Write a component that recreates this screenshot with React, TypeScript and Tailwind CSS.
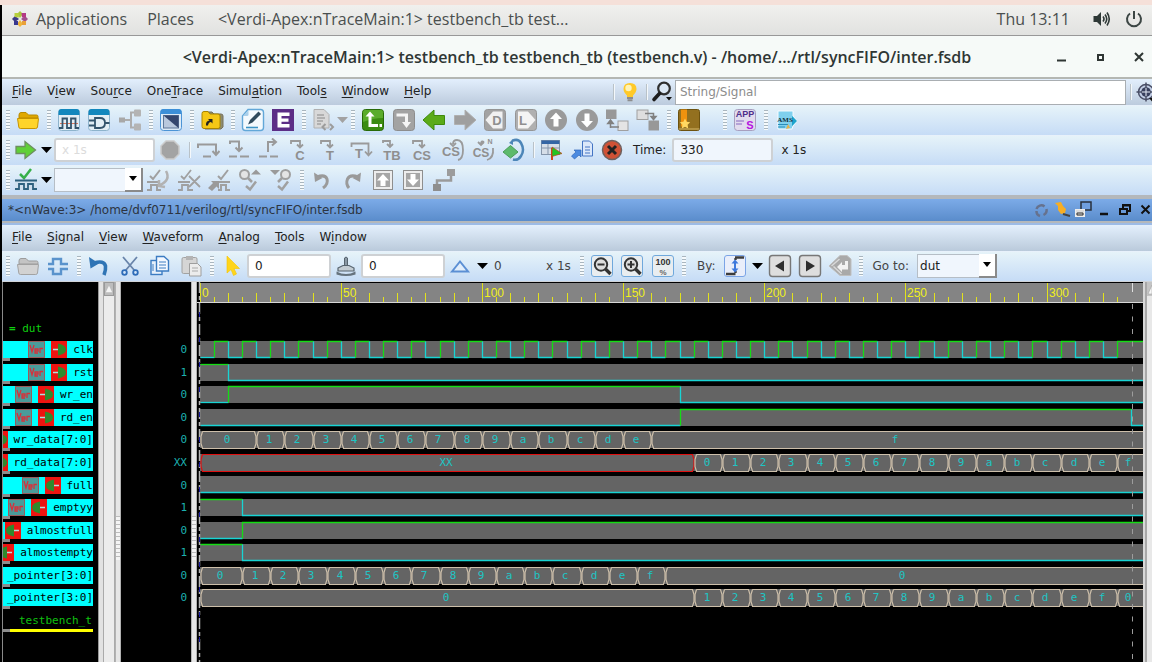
import type { ReactNode } from "react";

const GREY = "#9a9a9a";

const letterIcon = (label: string, size = 12, y = 21, x = 12) => (
  <text x={x} y={y} textAnchor="middle" fontSize={size} fontWeight="bold" fill="#8f8f8f" fontFamily="Liberation Sans, sans-serif">
    {label}
  </text>
);

const tile = (fill: string, stroke: string) => <rect x="1.5" y="1.5" width="21" height="21" rx="3" fill={fill} stroke={stroke} />;

const zoomGlass = (
  <>
    <rect x="1.5" y="1.5" width="21" height="21" rx="2.5" fill="#e9edf0" stroke="#6fa8dc" />
    <circle cx="11" cy="10.5" r="6.2" fill="#dedede" stroke="#333" strokeWidth="2" />
    <path d="M15.5 15l5 5" stroke="#333" strokeWidth="3.4" />
  </>
);

const icons: Record<string, ReactNode> = {
  folder: (
    <>
      <path d="M3 7q0-2.500 2-2.500h5l2.500 2.500h8q1.500 0 1.500 1.500V10H3z" fill="#e0a800" stroke="#b88a00" />
      <path d="M1.500 10.500h21L21.500 19q-.3 1.500-1.800 1.500H4.500q-1.500 0-1.700-1.500z" fill="#ffd42a" stroke="#c79400" />
    </>
  ),
  folderGrey: (
    <>
      <path d="M3 7q0-2.500 2-2.500h5l2.500 2.500h8q1.500 0 1.500 1.500V10H3z" fill="#c4c4c4" stroke="#9c9c9c" />
      <path d="M1.500 10.500h21L21.500 19q-.3 1.500-1.800 1.500H4.500q-1.500 0-1.700-1.500z" fill="#d2d2d2" stroke="#a2a2a2" />
    </>
  ),
  wave: (
    <>
      {tile("#e3eef5", "#8db3cc")}
      <path d="M1.500 7V4q0-3 3-3h15q3 0 3 3v3z" fill="#1287bd" />
      <path d="M3 15.500h18" stroke="#e0785a" strokeWidth="1" />
      <path d="M2 20h3.500V10.500h4.500V20h4V10.500h4.500V20H22" fill="none" stroke="#34546c" strokeWidth="1.800" />
    </>
  ),
  gate: (
    <>
      {tile("#e3eef5", "#8db3cc")}
      <path d="M1.500 7V4q0-3 3-3h15q3 0 3 3v3z" fill="#1287bd" />
      <path d="M8 10h5q5 0 5 5t-5 5H8zM2 12.500h6M2 17.500h6M18 15h4.500" fill="none" stroke="#34546c" strokeWidth="1.800" />
    </>
  ),
  tree: (
    <>
      <path d="M6 12h7M18 4.500h-5v15h5" fill="none" stroke="#adadad" strokeWidth="2" />
      <rect x="1" y="9.500" width="6" height="5" fill="#a8a8a8" />
      <rect x="16" y="1.500" width="7" height="7" rx="1" fill="#b4b4b4" />
      <rect x="16" y="15.500" width="7" height="7" rx="1" fill="#b4b4b4" />
    </>
  ),
  layout: (
    <>
      {tile("#dceaf7", "#4c94d6")}
      <path d="M1.500 6V4q0-3 3-3h15q3 0 3 3v2z" fill="#3c8fd8" />
      <rect x="4.500" y="7.500" width="15" height="12.500" fill="#b9c8dd" stroke="#5e7798" />
      <path d="M4.500 7.500h15V20z" fill="#34466e" />
    </>
  ),
  folderLink: (
    <>
      <path d="M5 6q0-2 2-2h5l2 2h7q2 0 2 2v11l-2 2H5z" fill="#8c8c72" stroke="#77705a" />
      <path d="M2 5.500q0-2 2-2h4l2 2.500h8q2 0 2 2v10.500q0 2-2 2H4q-2 0-2-2z" fill="#f5c715" stroke="#a88400" />
      <path d="M6 17.500q-.5-4.500 3.500-5l-1.500-1.500h4.500v4.500L11 14q-2.500.3-3 3.500z" fill="#222" />
    </>
  ),
  edit: (
    <>
      <path d="M7 1.500h12.500q3 0 3 3v15q0 3-3 3h-15q-3 0-3-3V8z" fill="#f3f9fd" stroke="#62a7d8" strokeWidth="1.400" />
      <path d="M2 8l5.500-6v4.500q0 1.500-1.500 1.500z" fill="#a9cfea" />
      <path d="M7 16.500L9 12l8.500-8.500 2.500 2.500-8.500 8.500z" fill="#2f4a5c" />
      <path d="M5 19.500h12" stroke="#3b93c6" strokeWidth="1.600" fill="none" />
    </>
  ),
  e: (
    <>
      <rect x="1" y="1" width="22" height="22" fill="#5c2d86" />
      <path d="M6.500 4.500h12V8h-8v2.500h7v3.200h-7V16h8v3.500h-12z" fill="#fff" />
    </>
  ),
  docCode: (
    <>
      <path d="M3 1.500h10l5 5V20H3z" fill="#d8d8d8" stroke="#b0b0b0" />
      <path d="M6 7h7M6 10h8M6 13h6M6 16h4" stroke="#a2a2a2" strokeWidth="1.400" />
      <path d="M14.500 16l-3 3 3 3M19 16l3 3-3 3" fill="none" stroke="#9c9c9c" strokeWidth="2" />
    </>
  ),
  greenL: (
    <>
      {tile("#3b8c12", "#286a08")}
      <path d="M2 4q0-2 2-2h16q2 0 2 2v6q-10 0-20 4z" fill="#5aac2c" />
      <path d="M9 3.500l4.500 5h-3v7.500h6.500V19H7.500V8.500h-3z" fill="#fff" />
      <rect x="18.500" y="16" width="2.500" height="3" fill="#fff" />
    </>
  ),
  greyJ: (
    <>
      {tile("#a3a3a3", "#8d8d8d")}
      <path d="M4.500 5.500h11.500V14h3l-4.500 6-4.500-6h3V8.500H4.500z" fill="#f5f5f5" />
    </>
  ),
  left: <path d="M1 12L12 2v5.500h10.500v9H12V22z" fill="#5bab18" stroke="#3f8a0c" />,
  right: <path d="M23 12L12 2v5.500H1.500v9H12V22z" fill="#9f9f9f" stroke="#b0b0b0" />,
  d: (
    <>
      {tile("#a3a3a3", "#959595")}
      <path d="M2.500 12L10 3.500h9.500v17H10z" fill="#f1f1f1" />
      {letterIcon("D", 13, 16.5, 14)}
    </>
  ),
  l: (
    <>
      {tile("#b0b0b0", "#959595")}
      <path d="M21.500 12L14 3.500H4v17h10z" fill="#f4f4f4" />
      {letterIcon("L", 13, 16.5, 9)}
    </>
  ),
  up: (
    <>
      <circle cx="12" cy="12" r="11" fill={GREY} />
      <path d="M12 4.500l6 6.500h-3.500v7.500h-5V11H6z" fill="#fff" />
    </>
  ),
  down: (
    <>
      <circle cx="12" cy="12" r="11" fill={GREY} />
      <path d="M12 19.500l6-6.500h-3.500V5.500h-5V13H6z" fill="#fff" />
    </>
  ),
  hierUp: (
    <>
      <rect x="1" y="1.500" width="10.500" height="9.500" fill="#989898" />
      <rect x="13" y="13" width="10" height="9.500" fill="#e4e4e4" stroke="#a0a0a0" />
      <path d="M5.500 20v-6M2.800 15.500L5.500 12l2.700 3.500zM5.500 19H14" fill="#808080" stroke="#808080" strokeWidth="1.500" />
    </>
  ),
  hierDown: (
    <>
      <rect x="1" y="2" width="11" height="9.500" fill="#dedede" stroke="#a0a0a0" />
      <rect x="12.500" y="12.500" width="10.500" height="10" fill="#989898" />
      <path d="M9 5.500h8.500V10M15 8.500l2.500 3 2.500-3z" fill="none" stroke="#808080" strokeWidth="1.500" />
    </>
  ),
  book: (
    <>
      <rect x="1.500" y="1.500" width="21" height="21" rx="2" fill="#93701f" stroke="#6d520f" />
      <rect x="4" y="1.500" width="6" height="17" fill="#f0920e" />
      <path d="M8 10.500l1.600 3.300 3.600.5-2.600 2.500.6 3.600L8 18.700l-3.200 1.700.6-3.600-2.600-2.500 3.600-.5z" fill="#ffd862" />
      <path d="M2 21h20" stroke="#d2b668" />
    </>
  ),
  apps: (
    <>
      {tile("#e2dcee", "#a79fbf")}
      <text x="12" y="9" textAnchor="middle" fontSize="9" fontWeight="bold" fill="#4e2f8a" fontFamily="Liberation Sans, sans-serif">APP</text>
      <text x="17" y="21" textAnchor="middle" fontSize="11" fontWeight="bold" fill="#b516e0" fontFamily="Liberation Sans, sans-serif">S</text>
      <path d="M3 13h8M3 16h6" stroke="#a58fd0" strokeWidth="1.500" />
    </>
  ),
  ams: (
    <>
      <path d="M4 3h15v5l4 5-4 5-1 3H4z" fill="#7fd0ee" stroke="#f4fbff" />
      <path d="M18 8l5 5-5 5z" fill="#1ea4cc" />
      <path d="M4 16.500h10M4 19h7" stroke="#2a8db9" />
      <text x="11" y="14" textAnchor="middle" fontSize="7" fontWeight="bold" fill="#12303c" fontFamily="Liberation Serif, serif">AMS</text>
      <path d="M12 21l2-5 2 4z" fill="#e8b04a" />
    </>
  ),
  go: <path d="M2 8.500h9V3.500L21.500 12 11 20.500v-5H2z" fill="#5fd038" stroke="#6d8f60" strokeWidth="1.300" />,
  octagon: <path d="M8 3h8l5 5v8l-5 5H8l-5-5V8z" fill="#a3a3a3" stroke="#cccccc" strokeWidth="1.500" />,
  s1: <path d="M2 10V6.500h18V16M16.500 13l3.500 4 3.500-4M7 18.500h8" fill="none" stroke={GREY} strokeWidth="2" />,
  s2: <path d="M3 6V3.500h9V12M8.500 9.500L12 13l3.500-3.500M2 18.500h8M13 18.500h9" fill="none" stroke={GREY} strokeWidth="2" />,
  s3: <path d="M11 14V4h7M15 .5L19 4l-4 3.500M2 18.500h8M13 18.500h8" fill="none" stroke={GREY} strokeWidth="2" />,
  s4: (
    <>
      <path d="M3 6V3h9v5M9 6.500l3 3 3-3" fill="none" stroke={GREY} strokeWidth="1.800" />
      {letterIcon("C", 13, 22)}
    </>
  ),
  s5: (
    <>
      <path d="M3 6V3h9v5M9 6.500l3 3 3-3" fill="none" stroke={GREY} strokeWidth="1.800" />
      {letterIcon("T", 13, 22)}
    </>
  ),
  s6: (
    <>
      <path d="M2.500 9V5.500h17V16M16 13.500l3.500 4 3.500-4" fill="none" stroke={GREY} strokeWidth="1.800" />
      {letterIcon("T", 13, 20, 10)}
    </>
  ),
  s7: (
    <>
      <path d="M3 5V3h7v5M7 6l3 3 3-3" fill="none" stroke={GREY} strokeWidth="1.800" />
      {letterIcon("TB", 13, 22)}
    </>
  ),
  s8: (
    <>
      <path d="M3 6V3h9v5M9 6.500l3 3 3-3" fill="none" stroke={GREY} strokeWidth="1.800" />
      {letterIcon("CS", 13, 22)}
    </>
  ),
  s9: (
    <>
      <path d="M12 6q0-4 4-4 6 0 6 10 0 9-5 10M9 5l3 3 3-3" fill="none" stroke={GREY} strokeWidth="1.800" />
      {letterIcon("CS", 13, 18, 10)}
    </>
  ),
  s10: (
    <>
      <path d="M13 4q-3-2-3 2M7 4l3 3 3-3M22 10q1 10-6 12" fill="none" stroke={GREY} strokeWidth="1.800" />
      {letterIcon("CS", 12, 19, 10)}
      {letterIcon("N", 7, 6, 19)}
    </>
  ),
  diamond: (
    <>
      <path d="M10 3q6-3 9 2 4 7 0 13-3 5-8 3.500" fill="none" stroke="#4d86b8" strokeWidth="2.500" />
      <path d="M7 5l4-4v6z" fill="#4d86b8" />
      <path d="M1 14l7.500-6.500L16 14l-7.500 6z" fill="#5dba6c" stroke="#4a9c58" />
    </>
  ),
  flagTable: (
    <>
      <rect x="1.500" y="2.500" width="18" height="14" fill="#d6dee8" stroke="#8595aa" />
      <path d="M1.500 2.500h18V6h-18z" fill="#3465a4" />
      <path d="M2 10h17M8 6v10" stroke="#8595aa" />
      <path d="M12 10v12" stroke="#d6401a" strokeWidth="2" />
      <path d="M12 9l10 6.500-10 3z" fill="#23c423" stroke="#c4401a" strokeWidth=".7" />
    </>
  ),
  docArrow: (
    <>
      <path d="M12.500 3h7l3 3v12h-10z" fill="#dbe8fa" stroke="#4475c4" />
      <path d="M15 9h5M15 12h5M15 15h5" stroke="#4475c4" />
      <path d="M1.500 18l4.500-4-2-2h7v7l-2-2-4.500 4z" fill="#4b8ae0" stroke="#2f66ba" strokeWidth=".7" />
    </>
  ),
  stop: (
    <>
      <circle cx="12" cy="12" r="9.500" fill="#cf5236" stroke="#6d6260" strokeWidth="1.500" />
      <path d="M8 8l8 8M16 8l-8 8" stroke="#222" strokeWidth="3" />
    </>
  ),
  checkWave: (
    <>
      <path d="M6 6l4 4 7-9" fill="none" stroke="#36b04a" strokeWidth="2.500" />
      <rect x="1" y="12" width="22" height="10.500" fill="#cfe0ee" />
      <path d="M1 12.500h22M1 21h4v-5h5v5h4v-5h5v5h4" fill="none" stroke="#2d617f" strokeWidth="1.800" />
    </>
  ),
  c1: (
    <>
      <path d="M4 8l3 3 7-9M1 14h12M1 22h4v-5h6v5h4" fill="none" stroke="#a0a0a0" strokeWidth="2" />
      <path d="M20 3q5 9-6 14M13 12l0 6 6 1" fill="none" stroke="#b2b2b2" strokeWidth="2.500" />
    </>
  ),
  c2: <path d="M4 8l3 3 7-9M1 14h12M1 22h4v-5h6v5h5M12 8l11 11M23 8L12 19" fill="none" stroke="#a0a0a0" strokeWidth="1.800" />,
  c3: (
    <>
      <path d="M11 8l3 3 7-9M11 14h12M11 22h3v-5h5v5h4" fill="none" stroke="#a0a0a0" strokeWidth="2" />
      <path d="M1 20l5-5-2-2h8v8l-2.500-2.500L5 23z" fill={GREY} />
    </>
  ),
  c4: (
    <>
      <circle cx="6.500" cy="6.500" r="4.500" fill="#e4e4e4" stroke="#a0a0a0" strokeWidth="2" />
      <path d="M10 10l4 4M8 18l4 3.500 6-8" fill="none" stroke="#a0a0a0" strokeWidth="2.500" />
      <path d="M13 6.500l5-5 5 5z" fill={GREY} />
    </>
  ),
  c5: (
    <>
      <circle cx="16.500" cy="6.500" r="4.500" fill="#e4e4e4" stroke="#a0a0a0" strokeWidth="2" />
      <path d="M13 10l-4 4M9 18l4 3.500 6-8" fill="none" stroke="#a0a0a0" strokeWidth="2.500" />
      <path d="M1 2h10L6 7z" fill={GREY} />
    </>
  ),
  undoGrey: (
    <>
      <path d="M7 9q8-3 10 2 1.500 5-4 9" fill="none" stroke={GREY} strokeWidth="3" />
      <path d="M4 4.500l1 9.500 7.500-4z" fill={GREY} />
    </>
  ),
  redoGrey: (
    <>
      <path d="M17 9Q9 6 6.500 11q-2 5 1.500 9" fill="none" stroke={GREY} strokeWidth="3" />
      <path d="M20 4.500L19 14l-7.500-4z" fill={GREY} />
    </>
  ),
  boxUp: (
    <>
      <rect x="2.500" y="2.500" width="19" height="19" fill="#ededed" stroke="#8e8e8e" />
      <rect x="5" y="5" width="14" height="14" fill="#a6a6a6" />
      <path d="M12 6l6 6.500h-3.500V18h-5v-5.500H6z" fill="#fff" />
    </>
  ),
  boxDown: (
    <>
      <rect x="2.500" y="2.500" width="19" height="19" fill="#ededed" stroke="#8e8e8e" />
      <rect x="5" y="5" width="14" height="14" fill="#a6a6a6" />
      <path d="M12 18l6-6.500h-3.500V6h-5v5.500H6z" fill="#fff" />
    </>
  ),
  link: (
    <>
      <path d="M5 18v-5.500h14V6" fill="none" stroke={GREY} strokeWidth="2.500" />
      <rect x="1" y="16" width="8" height="7" fill="#8e8e8e" />
      <rect x="15" y="1" width="8" height="7" fill="#9c9c9c" />
    </>
  ),
  crossWave: (
    <path d="M2 10h5V5h8v5h7M2 15h5v5h8v-5h7" fill="none" stroke="#5a93cc" strokeWidth="2.400" />
  ),
  undoBlue: (
    <>
      <path d="M7 9q10-3 11.500 3 .5 4-1.500 9" fill="none" stroke="#2f74b5" strokeWidth="3.600" />
      <path d="M2 3l1.500 11.500 8.500-5z" fill="#2f74b5" />
    </>
  ),
  cut: (
    <>
      <path d="M5 3l11.500 13.500M19 3L7.500 16.500" stroke="#6884aa" strokeWidth="1.800" />
      <circle cx="6.500" cy="18.500" r="2.300" fill="none" stroke="#2f6cb8" strokeWidth="1.800" />
      <circle cx="17.500" cy="18.500" r="2.300" fill="none" stroke="#2f6cb8" strokeWidth="1.800" />
    </>
  ),
  copy: (
    <>
      <rect x="3" y="6.500" width="11" height="14" fill="#e6f0fb" stroke="#3c7cc2" strokeWidth="1.400" />
      <path d="M8.500 2.500h7.500l4.500 4V17h-12z" fill="#f3f8ff" stroke="#3c7cc2" strokeWidth="1.400" />
      <path d="M11 8h7M11 11h7M11 14h7M5 10v7" stroke="#3c7cc2" />
    </>
  ),
  paste: (
    <>
      <rect x="3" y="3.500" width="15" height="16" rx="1.500" fill="#d5d5d5" stroke="#a2a2a2" />
      <rect x="7" y="2" width="7" height="4" fill="#b4b4b4" />
      <path d="M10.500 9.500h8l3.500 3.500v9H10.500z" fill="#ececec" stroke="#9e9e9e" />
      <path d="M13 14h6M13 17h6" stroke="#aaa" />
    </>
  ),
  pointer: <path d="M7 2v17l4-3.500 2.500 6 3-1.500-2.500-5.500h5.500z" fill="#ffd51c" stroke="#f5c400" strokeWidth=".6" />,
  stamp: (
    <>
      <path d="M10.500 4q1.500-2 3 0v9h-3z" fill="#8a98a4" stroke="#56636e" />
      <path d="M4 14l5-2.500h6l5 2.500v3H4z" fill="#c3ccd3" stroke="#56636e" strokeWidth="1.200" />
      <path d="M2.500 17.500q9.500 5 19 0v3q-9.500 3-19 0z" fill="#66737e" />
    </>
  ),
  delta: <path d="M4 17.500L12 7.500l8 10z" fill="#e2eefb" stroke="#5b8fd4" strokeWidth="2" />,
  zoomOut: (
    <>
      {zoomGlass}
      <path d="M7.500 10.500h7" stroke="#333" strokeWidth="2" />
    </>
  ),
  zoomIn: (
    <>
      {zoomGlass}
      <path d="M7.500 10.500h7M11 7v7" stroke="#333" strokeWidth="2" />
    </>
  ),
  hundred: (
    <>
      <rect x="1.500" y="1.500" width="21" height="21" rx="2.500" fill="#e9edf0" stroke="#6fa8dc" />
      <text x="12" y="10.500" textAnchor="middle" fontSize="9" fontWeight="bold" fill="#333" fontFamily="Liberation Sans, sans-serif">100</text>
      <text x="12" y="20.500" textAnchor="middle" fontSize="8" fontWeight="bold" fill="#666" fontFamily="Liberation Sans, sans-serif">%</text>
    </>
  ),
  by: (
    <>
      <rect x="1.500" y="1.500" width="21" height="21" rx="2.500" fill="#e9eefa" stroke="#7ba4e6" />
      <path d="M12 3.500h9M3 20h9.500M12.500 19v-2M12.500 4v2" stroke="#3c3c3c" strokeWidth="2.400" />
      <path d="M12 8v8" stroke="#3d78dc" strokeWidth="2" />
      <path d="M8.500 9.500L12 5.500l3.500 4zM8.500 14.500l3.500 4 3.500-4z" fill="#3d78dc" />
    </>
  ),
  prev: (
    <>
      <rect x="1.500" y="1.500" width="21" height="21" rx="3" fill="#dedede" stroke="#777" strokeWidth="1.400" />
      <path d="M7 12l9-5.500v11z" fill="#2e2e2e" />
    </>
  ),
  next: (
    <>
      <rect x="1.500" y="1.500" width="21" height="21" rx="3" fill="#dedede" stroke="#777" strokeWidth="1.400" />
      <path d="M17 12L8 6.500v11z" fill="#2e2e2e" />
    </>
  ),
  back: (
    <>
      <path d="M1 12L12 1.500h7L23 5v16.500H12z" fill="#a9a9a9" stroke="#c0c0c0" />
      <path d="M3.500 12l8-7M5.500 12.500l8 7.500" stroke="#d9d9d9" strokeWidth="1.500" />
      <path d="M9 13l5-5v3h3V7h3v8.500h-6V18z" fill="#f2f2f2" />
    </>
  ),
  bulb: (
    <>
      <path d="M12 3q6.500 0 6.500 6 0 3-3.500 6.500v1.500H9v-1.500Q5.500 12 5.500 9q0-6 6.500-6z" fill="#ffc928" />
      <circle cx="10.500" cy="8" r="3.200" fill="#fff3b4" />
      <path d="M9 18h6M9.500 20.300h5" stroke="#8d8d8d" strokeWidth="2" />
    </>
  ),
  search: (
    <>
      <circle cx="13" cy="8.500" r="5.800" fill="#dce8f5" stroke="#2f2f2f" strokeWidth="2.200" />
      <path d="M8.500 13.500L3 19.500" stroke="#1c1c1c" strokeWidth="3.600" strokeLinecap="round" />
      <path d="M15 17h6l-3 3.500z" fill="#111" />
    </>
  ),
  target: (
    <>
      <circle cx="12" cy="12" r="7.500" fill="#c3cfe6" stroke="#4a4f66" strokeWidth="1.500" />
      <circle cx="12" cy="12" r="4.800" fill="#39405e" />
      <path d="M12 2.500v19M2.500 12h19" stroke="#4a4f66" strokeWidth="1.500" />
      <path d="M12 8v8M8 12h8" stroke="#dfe6f5" />
      <path d="M15 18h6l-3 3.500z" fill="#111" />
    </>
  ),
};

function Tool({ id, label, grow, narrow }: { id: string; label: string; grow?: boolean; narrow?: boolean }) {
  const size = grow ? "min-w-0 flex-1" : narrow ? "w-[25px] shrink-0" : "w-[30px] shrink-0";
  return (
    <button type="button" aria-label={label} className={`flex h-6 justify-center ${size}`}>
      <svg viewBox="0 0 24 24" className="h-6 w-6 shrink-0" aria-hidden="true">{icons[id]}</svg>
    </button>
  );
}

function Group({ items, className }: { items: [string, string][]; className: string }) {
  return (
    <div className={`flex shrink-0 ${className}`}>
      {items.map(([id, label]) => <Tool key={id} id={id} label={label} grow />)}
    </div>
  );
}

const Grip = () => (
  <span className="flex h-5 w-[11px] shrink-0 justify-center">
    <span className="w-1 bg-[repeating-linear-gradient(to_bottom,#a9b6bf_0_1px,#f6fafc_1px_3px)]" />
  </span>
);

const Sep = () => <span className="flex w-2 shrink-0 justify-center"><span className="h-4 w-px bg-[#b9c2c8] shadow-[1px_0_0_#f4f8fb]" /></span>;

function Caret({ label, muted }: { label: string; muted?: boolean }) {
  return (
    <button type="button" aria-label={label} className={`flex h-6 shrink-0 items-center justify-center ${muted ? "w-2.5" : "w-[15px]"}`}>
      <svg viewBox="0 0 11 6" className="h-1.5 w-[11px] shrink-0" aria-hidden="true"><path d="M0 0h11L5.500 6z" fill={muted ? "#a2a2a2" : "#000"} /></svg>
    </button>
  );
}

function Combo({ label, value, className }: { label: string; value: string; className: string }) {
  return (
    <span className={`relative flex h-6 shrink-0 ${className}`}>
      <select aria-label={label} className="w-full appearance-none border border-[#b6bec6] bg-[#f0f6fd] pl-0.5 text-[12px] text-[#222] outline-none">
        <option>{value}</option>
      </select>
      <span className="pointer-events-none absolute inset-y-0 right-0 flex w-[18px] items-center justify-center border-r-2 border-b-2 border-[#8a8a8a] bg-white">
        <svg viewBox="0 0 8 5" className="h-[5px] w-2" aria-hidden="true"><path d="M0 0h8L4 5z" fill="#000" /></svg>
      </span>
    </span>
  );
}

function Menu({ items, className }: { items: [string, string, string][]; className?: string }) {
  return (
    <nav className={`flex h-full items-center gap-[15px] pb-0.5 pl-2.5 ${className ?? ""}`}>
      {items.map(([a, key, b]) => (
        <button key={a + key + b} type="button" className="shrink-0 whitespace-nowrap">
          {a}<span className="underline underline-offset-2">{key}</span>{b}
        </button>
      ))}
    </nav>
  );
}

const BAR = "flex h-[30px] shrink-0 items-center overflow-hidden border-t border-[#e8f1fb] bg-linear-to-b from-[#e6f3f9] to-[#c6dcf6] pb-0.5";
const FIELD = "h-6 shrink-0 rounded-[3px] border-2 border-[#ced1d4] px-1.5 text-[12px] text-[#222] outline-none";

type Wave =
  | { kind: "bit"; start: 0 | 1; edges: number[] }
  | { kind: "bus"; cells: [number, string][] };

type Signal = { name: string; value: string; port?: "in" | "out"; verilog?: boolean; wave: Wave };

const hex = "0123456789abcdef".split("");
const END = 334;

const signals: Signal[] = [
  { name: "clk", value: "0", port: "in", verilog: true, wave: { kind: "bit", start: 0, edges: Array.from({ length: 65 }, (_, i) => 5 + 5 * i) } },
  { name: "rst", value: "1", port: "in", verilog: true, wave: { kind: "bit", start: 1, edges: [10] } },
  { name: "wr_en", value: "0", port: "in", verilog: true, wave: { kind: "bit", start: 0, edges: [10, 170] } },
  { name: "rd_en", value: "0", port: "in", verilog: true, wave: { kind: "bit", start: 0, edges: [170, 330] } },
  { name: "wr_data[7:0]", value: "0", port: "in", wave: { kind: "bus", cells: hex.map((h, i) => [i ? 10 + 10 * i : 0, h]) } },
  { name: "rd_data[7:0]", value: "XX", port: "in", wave: { kind: "bus", cells: [[0, "XX"], ...hex.map((h, i): [number, string] => [175 + 10 * i, h])] } },
  { name: "full", value: "0", port: "out", verilog: true, wave: { kind: "bit", start: 0, edges: [] } },
  { name: "emptyy", value: "1", port: "out", verilog: true, wave: { kind: "bit", start: 1, edges: [15] } },
  { name: "almostfull", value: "0", port: "out", wave: { kind: "bit", start: 0, edges: [15] } },
  { name: "almostempty", value: "1", port: "out", wave: { kind: "bit", start: 1, edges: [15] } },
  { name: "_pointer[3:0]", value: "0", wave: { kind: "bus", cells: [...hex.map((h, i): [number, string] => [i ? 5 + 10 * i : 0, h]), [165, "0"]] } },
  { name: "_pointer[3:0]", value: "0", wave: { kind: "bus", cells: [[0, "0"], ...hex.slice(1).map((h, i): [number, string] => [175 + 10 * i, h]), [325, "0"]] } },
];

const px = (t: number) => Math.round(2.6 + 2.823 * t);
const rowTop = (i: number) => Math.round(59 + 22.58 * i);
const BAND = 17;

function BitTrace({ start, edges, top }: { start: 0 | 1; edges: number[]; top: number }) {
  const stops = [0, ...edges];
  return (
    <>
      {stops.map((t, i) => {
        const high = (start + i) % 2 === 1;
        const x1 = px(t) + 0.5;
        const x2 = i + 1 < stops.length ? px(stops[i + 1]) + 0.5 : 4000;
        const y = high ? top + 0.5 : top + BAND - 0.5;
        const from = high ? top + BAND - 0.5 : top + 0.5;
        return <path key={t} d={i ? `M${x1} ${from}V${y}H${x2}` : `M${x1} ${y}H${x2}`} fill="none" stroke={high ? "#14dc14" : "#18d4d4"} strokeWidth="1.3" />;
      })}
    </>
  );
}

function BusTrace({ cells, top }: { cells: [number, string][]; top: number }) {
  const b = top + BAND + 0.5;
  const a = top + 0.5;
  return (
    <>
      {cells.map(([t, text], i) => {
        const last = i + 1 === cells.length;
        const x1 = px(t) + 0.5;
        const x2 = last ? px(END) : px(cells[i + 1][0]) + 0.5;
        const bad = text === "XX";
        const right = last ? `H4000M4000 ${b}` : `H${x2 - 2}L${x2 - 0.5} ${a + 5}V${b - 5}L${x2 - 2} ${b}`;
        return (
          <g key={t}>
            <path d={`M${x1 + 2} ${a}${right}H${x1 + 2}L${x1 + 0.5} ${b - 5}V${a + 5}L${x1 + 2} ${a}`} fill="none" stroke={bad ? "#e01010" : "#cdbfaa"} strokeWidth="1.2" />
            <text x={Math.round((x1 + x2) / 2) - 2} y={top + 12} textAnchor="middle" fill="#20c4c4" fontSize="11">{text}</text>
          </g>
        );
      })}
    </>
  );
}

function Waveform() {
  return (
    <svg className="h-full w-full" fontFamily="DejaVu Sans Mono, monospace" role="img" aria-label="Waveforms">
      <rect x="3" y="1" width="100%" height="19" fill="#848484" />
      <rect x="0" y="20" width="100%" height="1" fill="#d8d8d8" />
      {Array.from({ length: 66 }, (_, i) => {
        const t = i * 5;
        const top = t % 50 === 0 ? 1 : t % 10 === 0 ? 11 : 15;
        return <rect key={t} x={px(t)} y={top} width="1" height={20 - top} fill="#e2e21c" />;
      })}
      {Array.from({ length: 7 }, (_, i) => (
        <text key={i} x={px(i * 50) + 2} y="15" fill="#f0f01c" fontSize="12" fontFamily="Liberation Sans, sans-serif">{i * 50}</text>
      ))}
      {signals.map((s, i) => {
        const top = rowTop(i);
        return (
          <g key={i}>
            <rect x="3" y={top} width="100%" height={BAND} fill="#646464" />
            {s.wave.kind === "bit" ? <BitTrace start={s.wave.start} edges={s.wave.edges} top={top} /> : <BusTrace cells={s.wave.cells} top={top} />}
          </g>
        );
      })}
      <path d="M2.500 0V4000" stroke="#b4b4b4" strokeDasharray="11 3 4 3" strokeWidth="1.500" />
      <path d="M2.500 30V4000" stroke="#1a1aa0" strokeDasharray="5 20" />
      <path d="M935.500 1V10" stroke="#e0e0e0" />
      <path d="M935.500 22V4000" stroke="#9c9c9c" strokeDasharray="5 7.500" />
    </svg>
  );
}

const Verilog = () => (
  <svg viewBox="0 0 17 17" className="h-[17px] w-[17px] shrink-0" aria-hidden="true">
    <rect width="17" height="17" fill="#4a9c9a" />
    <path d="M.5 .5h16v16H.5z" fill="none" stroke="#9a5c5c" />
    <path d="M2 4l2 7 2-7M7 10h3V8H7v4h3M12 12V7.500h3" fill="none" stroke="#d8303a" strokeWidth="1.300" />
  </svg>
);

const Port = ({ out }: { out: boolean }) => (
  <svg viewBox="0 0 16 17" className={out ? "h-[17px] w-4 shrink-0 -scale-x-100" : "h-[17px] w-4 shrink-0"} aria-hidden="true">
    <rect width="16" height="17" fill="#ee1410" />
    <path d="M7 2.500q8 1.500 8 6t-8 6z" fill="#2f8a2c" />
    <path d="M2 8.500h5" stroke="#b8dede" strokeWidth="1.500" />
  </svg>
);

const Splitter = () => (
  <div className="flex w-[6px] shrink-0 flex-col border-x border-[#b2b2b2] bg-[#e6e6e6] pt-[234px]">
    <span className="h-11 bg-[repeating-linear-gradient(to_bottom,#bcbcbc_0_1px,#f4f4f4_1px_4px)]" />
  </div>
);

const ROWS = "grid h-[271px] shrink-0 auto-rows-fr";

export default function App() {
  return (
    <div className="flex min-h-screen flex-col overflow-hidden bg-black font-['DejaVu_Sans',sans-serif] text-[12px] text-[#222]">
      <div className="h-[5px] shrink-0 bg-[#f5e0d9]" />
      <div className="flex flex-1 flex-col pl-0.5">
        <header className="flex h-[31px] shrink-0 items-center border-b border-[#989898] bg-linear-to-b from-[#f0f0ee] to-[#e1e2e0] pr-2 pb-0.5 pl-2 font-['Open_Sans',sans-serif] text-[16px] text-[#4a4f4e]">
          <svg viewBox="0 0 20 20" className="h-5 w-5" aria-hidden="true">
            <path d="M10 2l3 3-3 4-3-4z" fill="#a7c640" />
            <path d="M18 10l-3 3-4-3 4-3z" fill="#a14f8c" />
            <path d="M10 18l-3-3 3-4 3 4z" fill="#f0b53a" />
            <path d="M2 10l3-3 4 3-4 3z" fill="#3d3a86" />
            <path d="M4.500 4h4L9 8.500 4.500 8z" fill="#b8d03c" />
            <path d="M16 4v4.500h-4L11.500 4z" fill="#b43a86" />
            <path d="M16 16h-4v-4h4z" fill="#e8a03a" />
            <path d="M4 16v-4h4v4z" fill="#3a3990" />
          </svg>
          <button type="button" className="ml-1.5">Applications</button>
          <button type="button" className="ml-5">Places</button>
          <button type="button" className="ml-6">&lt;Verdi-Apex:nTraceMain:1&gt; testbench_tb test...</button>
          <time className="mr-[22px] ml-auto">Thu 13:11</time>
          <button type="button" aria-label="Volume" className="mr-3">
            <svg viewBox="0 0 20 20" className="h-5 w-5" aria-hidden="true">
              <path d="M1.500 7h3.500l4-4v14l-4-4H1.500z" fill="#2e3836" />
              <path d="M11 7.500q2 2.500 0 5M13 5.500q3.500 4.500 0 9M15 3.500q4.500 6.500 0 13" fill="none" stroke="#2e3836" strokeWidth="1.600" />
            </svg>
          </button>
          <button type="button" aria-label="Power">
            <svg viewBox="0 0 20 20" className="h-5 w-5" aria-hidden="true">
              <path d="M6 4.500a7 7 0 1 0 8 0M10 2v8" fill="none" stroke="#3c4644" strokeWidth="2" />
            </svg>
          </button>
        </header>

        <div className="grid h-[43px] shrink-0 grid-cols-[1fr_auto_1fr] items-center border-b-2 border-[#b4b7b3] bg-[#f6faf8] text-[#2f3634]">
          <span />
          <h1 className="font-['Open_Sans',sans-serif] text-[16px] font-semibold whitespace-nowrap">
            &lt;Verdi-Apex:nTraceMain:1&gt; testbench_tb testbench_tb (testbench.v) - /home/.../rtl/syncFIFO/inter.fsdb
          </h1>
          <div className="flex justify-end gap-[27px] pr-[7px]">
            <button type="button" aria-label="Minimize"><svg viewBox="0 0 12 12" className="h-3 w-3"><path d="M2 9.500h9" stroke="#2f3634" strokeWidth="2" /></svg></button>
            <button type="button" aria-label="Maximize"><svg viewBox="0 0 12 12" className="h-3 w-3"><rect x="4" y="4" width="5" height="5" fill="none" stroke="#2f3634" strokeWidth="2" /></svg></button>
            <button type="button" aria-label="Close"><svg viewBox="0 0 12 12" className="h-3 w-3"><path d="M2 2l8 8M10 2l-8 8" stroke="#2f3634" strokeWidth="2" /></svg></button>
          </div>
        </div>

        <div className="flex h-[26px] shrink-0 items-center overflow-hidden bg-linear-to-b from-[#e3effd] to-[#bccbdd]">
          <Menu
            className="w-[607px] shrink-0"
            items={[["", "F", "ile"], ["V", "i", "ew"], ["Sou", "r", "ce"], ["One", "T", "race"], ["Simul", "a", "tion"], ["Tool", "s", ""], ["", "W", "indow"], ["", "H", "elp"]]}
          />
          <Sep />
          <Tool id="bulb" label="Tips" narrow />
          <Sep />
          <Tool id="search" label="Search type" narrow />
          <input aria-label="Search" placeholder="String/Signal" className="h-[25px] min-w-0 flex-1 border border-[#a9aeb2] bg-white px-1 text-[12px] outline-none placeholder:text-[#8c8c8c]" />
          <Sep />
          <button type="button" aria-label="Locate" className="w-[18px] shrink-0 overflow-hidden">
            <svg viewBox="0 0 24 24" className="h-6 w-6">{icons.target}</svg>
          </button>
        </div>

        <div className={BAR}>
          <Grip />
          <Tool id="folder" label="Open" />
          <Grip />
          <Group className="w-[91px]" items={[["wave", "New waveform"], ["gate", "New schematic"], ["tree", "Hierarchy"]]} />
          <Grip />
          <Tool id="layout" label="Layout" />
          <Grip />
          <Tool id="folderLink" label="Restore session" />
          <Grip />
          <Tool id="edit" label="Edit" />
          <Tool id="e" label="Editor" />
          <Grip />
          <Group className="w-7" items={[["docCode", "Source list"]]} />
          <Caret label="Source options" muted />
          <Grip />
          <Group
            className="w-[305px]"
            items={[["greenL", "Up scope"], ["greyJ", "Down scope"], ["left", "Back"], ["right", "Forward"], ["d", "Driver"], ["l", "Load"], ["up", "Previous"], ["down", "Next"], ["hierUp", "Parent"], ["hierDown", "Child"]]}
          />
          <Grip />
          <Tool id="book" label="Bookmarks" />
          <span className="w-[15px]" />
          <Grip />
          <Tool id="apps" label="Applications toolbox" />
          <Grip />
          <Tool id="ams" label="Analog mixed signal" />
        </div>

        <div className={BAR}>
          <Grip />
          <span className="flex w-[26px] shrink-0 justify-center"><Tool id="go" label="Run" /></span>
          <Caret label="Run options" />
          <input aria-label="Run time" placeholder="x 1s" className={`${FIELD} w-[101px] bg-white placeholder:text-[#dcdcdc]`} />
          <Tool id="octagon" label="Stop" />
          <Sep />
          <Group
            className="w-[336px]"
            items={[["s1", "Step"], ["s2", "Next statement"], ["s3", "Step out"], ["s4", "Next in call"], ["s5", "Next in thread"], ["s6", "Step thread"], ["s7", "Step testbench"], ["s8", "Constraint step"], ["s9", "Solver step"], ["s10", "Next solver step"], ["diamond", "Loop"]]}
          />
          <Sep />
          <Tool id="flagTable" label="Checkpoints" />
          <Tool id="docArrow" label="Go to source" />
          <Tool id="stop" label="Terminate" />
          <label className="ml-1.5 flex items-center gap-1.5">Time:
            <input defaultValue="330" className={`${FIELD} w-[101px] bg-[#f0f6fd]`} />
          </label>
          <span className="ml-2">x 1s</span>
        </div>

        <div className={BAR}>
          <Grip />
          <span className="flex w-[26px] shrink-0 justify-center"><Tool id="checkWave" label="Checker" /></span>
          <Caret label="Checker options" />
          <Combo label="Checker" value="" className="w-[89px]" />
          <Group className="w-[153px]" items={[["c1", "Recheck"], ["c2", "Clear checks"], ["c3", "Go to check"], ["c4", "Previous failure"], ["c5", "Next failure"]]} />
          <Grip />
          <Group className="w-[152px]" items={[["undoGrey", "Undo"], ["redoGrey", "Redo"], ["boxUp", "Move up"], ["boxDown", "Move down"], ["link", "Connect"]]} />
        </div>

        <div className="flex h-7 shrink-0 items-center border-t-4 border-b-2 border-[#b4b8bc] bg-linear-to-b from-[#7cabe8] to-[#5a8ccb] pl-1.5">
          <h2 className="whitespace-nowrap text-[#2c3440]">*&lt;nWave:3&gt; /home/dvf0711/verilog/rtl/syncFIFO/inter.fsdb</h2>
          <div className="-mr-1 ml-auto flex">
            {([
              ["Reload", <path key="a" d="M4.500 8a5 5 0 0 1 8-2.500M14.500 8a5.500 5.500 0 0 1-3 6M8 15a5 5 0 0 1-3.500-5" fill="none" stroke="#66728e" strokeWidth="2.500" />],
              ["Pin", <g key="b"><path d="M2 2l6-1 2 4 3 3-1 4-4 1-3-4 0-4z" fill="#f7ae24" /><path d="M10 13l7 2" stroke="#444" strokeWidth="2" /></g>],
              ["Undock", <g key="c"><rect x="7" y="1" width="10" height="8" fill="#6f9fe0" stroke="#28303c" strokeWidth="1.500" /><rect x="1.500" y="8.500" width="9" height="7" fill="#ddd" stroke="#eee" /><path d="M3 12h6v2H3z" fill="none" stroke="#333" /></g>],
              ["Minimize", <path key="d" d="M5 13h8" stroke="#111" strokeWidth="2.500" />],
              ["Restore", <g key="e"><path d="M7 7V4h7v6h-2M7 4.500h7" fill="none" stroke="#111" strokeWidth="2" /><rect x="4" y="8" width="7" height="5" fill="none" stroke="#111" strokeWidth="2" /></g>],
              ["Close", <path key="f" d="M4.500 4.500l8 8M12.500 4.500l-8 8" stroke="#111" strokeWidth="2" />],
            ] as [string, ReactNode][]).map(([label, art]) => (
              <button key={label} type="button" aria-label={label} className="flex w-[21px] justify-center">
                <svg viewBox="0 0 18 18" className="h-[18px] w-[18px]">{art}</svg>
              </button>
            ))}
          </div>
        </div>

        <div className="h-7 shrink-0 border-t-2 border-[#9dbbe6] bg-linear-to-b from-[#e4f0fd] to-[#bacadb]">
          <Menu items={[["", "F", "ile"], ["", "S", "ignal"], ["", "V", "iew"], ["", "W", "aveform"], ["", "A", "nalog"], ["", "T", "ools"], ["W", "i", "ndow"]]} />
        </div>

        <div className={`${BAR} text-[#444]`}>
          <Grip />
          <Tool id="folderGrey" label="Open signals" />
          <Tool id="crossWave" label="Get signals" />
          <Grip />
          <Group className="w-[122px]" items={[["undoBlue", "Undo edit"], ["cut", "Cut"], ["copy", "Copy"], ["paste", "Paste"]]} />
          <Grip />
          <Tool id="pointer" label="Cursor" />
          <input aria-label="Cursor time" defaultValue="0" className={`${FIELD} w-[84px] bg-white`} />
          <Tool id="stamp" label="Marker" />
          <input aria-label="Marker time" defaultValue="0" className={`${FIELD} w-[84px] bg-white`} />
          <Tool id="delta" label="Delta" />
          <Caret label="Delta options" />
          <output className="ml-1 w-[52px]">0</output>
          <span className="w-[30px]">x 1s</span>
          <Grip />
          <Group className="w-[91px]" items={[["zoomOut", "Zoom out"], ["zoomIn", "Zoom in"], ["hundred", "Zoom full"]]} />
          <Grip />
          <span className="mr-1 ml-2">By:</span>
          <Tool id="by" label="Search by edge" />
          <Caret label="Edge options" />
          <Group className="w-[91px]" items={[["prev", "Search backward"], ["next", "Search forward"], ["back", "Trace"]]} />
          <Grip />
          <span className="mr-2 ml-1.5">Go to:</span>
          <Combo label="Go to" value="dut" className="w-20" />
        </div>

        <main className="flex min-h-0 flex-1 border-t border-[#d0d4d8]">
          <section className="flex w-24 shrink-0 flex-col overflow-hidden border-l border-[#8a8a8a] pr-[5px] font-['DejaVu_Sans_Mono',monospace] text-[11px] leading-[17px]" aria-label="Signals">
            <div className="flex h-[59px] shrink-0 items-end pb-1 pl-1.5 whitespace-pre text-[#10d010]"><b>=</b> dut</div>
            <div className={ROWS}>
              {signals.map((s, i) => (
                <div key={i} className="min-w-0">
                  <div className="flex h-[17px] items-center justify-end gap-1.5 overflow-hidden bg-[#00ffff] text-black">
                    {s.verilog && <Verilog />}
                    {s.port && <Port out={s.port === "out"} />}
                    <span className="shrink-0">{s.name}</span>
                  </div>
                  <div className="h-[3px] w-[7px] bg-[#8c8c8c]" />
                </div>
              ))}
            </div>
            <div className="h-[17px] shrink-0 pl-4 text-[#10c010]">testbench_t</div>
            <div className="flex h-[3px] shrink-0"><span className="w-[7px] bg-[#8c8c8c]" /><span className="flex-1 bg-[#ffff00]" /></div>
          </section>

          <div className="flex w-[17px] shrink-0 border-l border-[#999] bg-[#e2e2e2] pl-1">
            <div className="w-3 border-x border-[#aaa] bg-[#ececec]">
              <button type="button" aria-label="Scroll up" className="flex h-[14px] w-full items-center justify-center border border-[#999] bg-[#bdbdbd]">
                <svg viewBox="0 0 10 10" className="h-2.5 w-2.5"><path d="M5 1l4 8H1z" fill="#f4f4f4" /></svg>
              </button>
            </div>
          </div>
          <Splitter />

          <section className="w-[70px] shrink-0 overflow-hidden pt-[59px] pr-1 text-right font-['DejaVu_Sans_Mono',monospace] text-[11px] leading-[17px] text-[#1cb0b0]" aria-label="Values">
            <div className={ROWS}>
              {signals.map((s, i) => <div key={i}>{s.value}</div>)}
            </div>
          </section>
          <Splitter />

          <section className="min-h-[380px] min-w-0 flex-1 overflow-hidden"><Waveform /></section>

          <div className="flex w-[9px] shrink-0 border-l-2 border-[#d8d8d8] bg-[#e8e8e8]">
            <span className="w-0.5 bg-[#a8a8a8]" />
            <svg viewBox="0 0 5 14" className="h-3.5 w-[5px]"><rect width="5" height="14" fill="#c4c4c4" /><path d="M5 3v9H1z" fill="#f6f6f6" stroke="#999" strokeWidth=".5" /></svg>
          </div>
        </main>
      </div>
    </div>
  );
}
